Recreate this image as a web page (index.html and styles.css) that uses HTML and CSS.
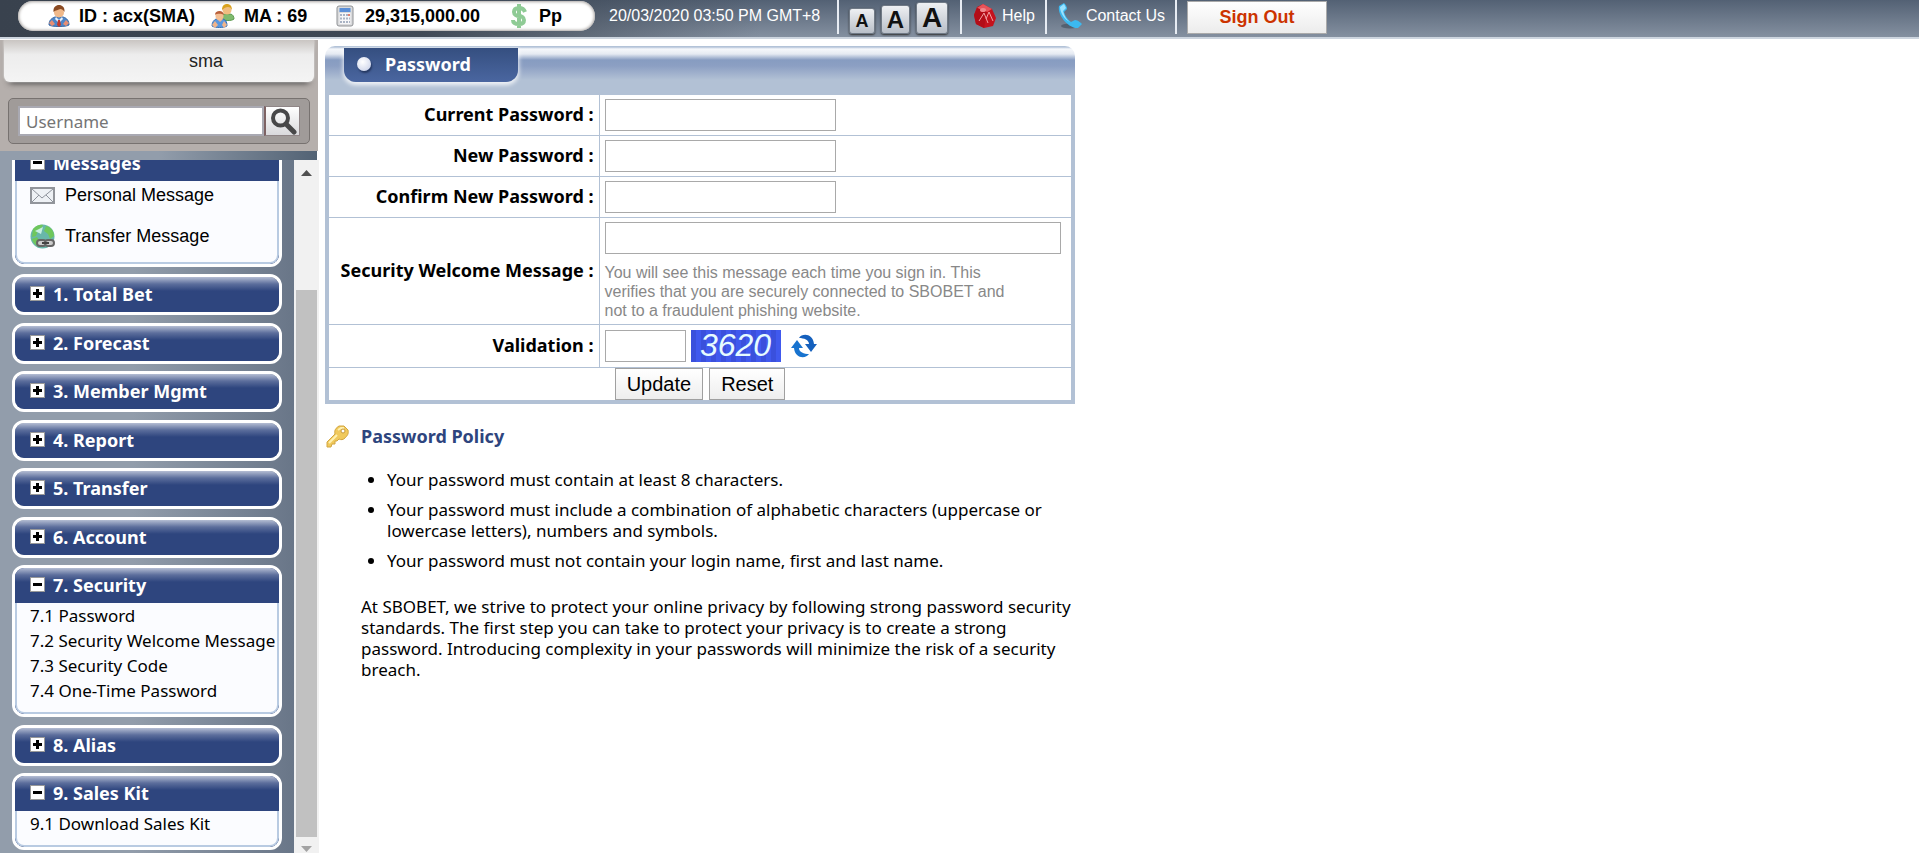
FILE: index.html
```html
<!DOCTYPE html>
<html lang="en">
<head>
<meta charset="utf-8">
<title>Password</title>
<link rel="stylesheet" href="styles.css">
</head>
<body>
<header class="topbar">
  <div class="account">
    <span class="stat stat-id"><svg width="22" height="22" viewBox="0 0 22 22"><path d="M1 20c0-5 3-7 6-8h8c4 1 6 4 6 8-3 2-17 2-20 0z" fill="#4d86c9" stroke="#3a68a3"/><path d="M8 12l3 3 3-3 1 2-3 3-1 4-1-4-3-3z" fill="#e9f1fb"/><path d="M10 15h2l1 5-2 2-2-2z" fill="#c33a2c"/><circle cx="11" cy="7.500" r="5" fill="#f0b98a"/><path d="M5.500 7C5 2 8 0 11 0s6 2 5.500 7c-1-2-3-3-4-3-2 1-5 1-7 3z" fill="#8a4a22"/><path d="M1 18l3-3 3 4-3 2zM21 18l-3-3-3 4 3 2z" fill="#e88e72"/></svg>ID : acx(SMA)</span>
    <span class="stat stat-ma"><svg width="24" height="24" viewBox="0 0 24 24"><path d="M10 15c0-4 2-5 4-5h5c3 0 4 3 4 5-2 2-10 2-13 0z" fill="#7fbb6e" stroke="#5d9a50"/><circle cx="16" cy="6" r="4.500" fill="#f0bd80"/><path d="M11 6c0-4 2-6 5-6s5 2 5 6c-1-2-2-3-4-3s-4 1-6 3z" fill="#d9a21e"/><path d="M1 22c0-4 2-6 4-7h7c3 1 4 3 4 7-3 2-12 2-15 0z" fill="#5a98df" stroke="#3a72b5"/><path d="M1 21l3-4 3 4-3 3zM16 21l-3-4-2 4 2 3zM6 15l3 3 3-3z" fill="#f0b48a"/><circle cx="8.500" cy="12" r="4" fill="#f3be92"/><path d="M4 11c0-3 2-4 4.500-4S13 9 13 11c-2-1-6-2-9 0z" fill="#b9603a"/></svg>MA : 69</span>
    <span class="stat stat-balance"><svg width="18" height="22" viewBox="0 0 18 22"><rect x="1" y="1" width="16" height="20" rx="2" fill="#d9dadc" stroke="#8f9194"/><rect x="3.500" y="3" width="11" height="4" fill="#5b8fd8"/><path d="M3.500 8h11v11h-11z" fill="#f7f7f8"/><path d="M4 10h10M4 13.500h10M4 17h10" stroke="#a9b3c4" stroke-width="2" stroke-dasharray="2 1"/><path d="M12 10h2" stroke="#e08070" stroke-width="2"/></svg>29,315,000.00</span>
    <span class="stat stat-currency"><svg width="16" height="24" viewBox="0 0 16 24"><path d="M14 8c-1-3-3-4-6-4s-5 1-5 4 3 4 5 4 5 1 5 4-2 4-5 4-6-1-6-4M8 0v24" fill="none" stroke="#8fcb95" stroke-width="4"/></svg>Pp</span>
  </div>
  <time class="clock">20/03/2020 03:50 PM GMT+8</time>
  <div class="sizes">
    <button class="size size-s" aria-label="Small text">A</button>
    <button class="size size-m" aria-label="Medium text">A</button>
    <button class="size size-l" aria-label="Large text">A</button>
  </div>
  <a class="toplink help" href="#"><svg width="24" height="26" viewBox="0 0 24 26"><path d="M10 1l9 5 4 9-3 8-9 2-8-4-2-9 3-8z" fill="#c5121c"/><path d="M10 1l9 5-5 3-10-4z" fill="#e8545a"/><path d="M4 5l10 4-3 16-8-4-2-9z" fill="#b30d17"/><path d="M6 18l5-8 4 10M13 16l3-7 4 9" fill="none" stroke="#f2a0a3"/><ellipse cx="10" cy="7" rx="3" ry="2" fill="#f0888c"/></svg>Help</a>
  <a class="toplink contact" href="#"><svg width="25" height="26" viewBox="0 0 25 26"><ellipse cx="12" cy="23" rx="9" ry="2.500" fill="#33404e" opacity=".5"/><path d="M1 3l5-3c2 2 3 4 3 6l-3 3c1 4 4 8 7 10l4-2c3 0 6 3 7 4l-4 4C12 26-1 13 1 3z" fill="#3cb9f0"/><path d="M2 4l4-3 2 4-3 3c1 5 4 9 7 11-5-2-10-9-10-15z" fill="#9be2ff"/></svg>Contact Us</a>
  <button class="signout">Sign Out</button>
</header>

<div class="frames">
  <aside class="sidebar">
    <div class="userbox">
      <div class="nickname">sma</div>
      <form class="search">
        <input type="text" placeholder="Username" aria-label="Username">
        <button type="button" aria-label="Search"><svg width="28" height="28" viewBox="0 0 28 28"><circle cx="11.500" cy="11" r="7.500" fill="none" stroke="#484849" stroke-width="4"/><path d="M17 17l8 8" stroke="#484849" stroke-width="5" stroke-linecap="round"/></svg></button>
      </form>
    </div>
    <div class="strip"></div>
    <div class="scroller">
      <nav class="menu">
        <section class="group open">
          <button class="heading"><i class="sign minus"></i>Messages</button>
          <ul class="messages">
            <li><a href="#"><svg width="25" height="17" viewBox="0 0 25 17"><rect x="1" y="1" width="23" height="15" fill="#eef1f5" stroke="#92959b" stroke-width="2"/><path d="M2 2l10 9L23 2M2 15l7-7M23 15l-7-7" fill="none" stroke="#8e939c"/></svg>Personal Message</a></li>
            <li><a href="#"><svg width="25" height="25" viewBox="0 0 25 25"><circle cx="12.500" cy="12.500" r="12" fill="#68b7a9"/><path d="M3 5c3-4 8-5 10-4l-2 4-3 2-2 5-4 1M16 2c5 1 8 5 8 10l-4 3-2-5-4-3zM2 15l5-2 4 6-1 4c-4-1-7-4-8-8z" fill="#6fc75c"/><path d="M5 7l8-4-2 7z" fill="#c8efe3"/><rect x="7" y="16" width="9" height="6" rx="3" fill="#ccc" stroke="#666" stroke-width="2"/><rect x="15" y="16" width="9" height="6" rx="3" fill="#ccc" stroke="#666" stroke-width="2"/><path d="M12 19h7" stroke="#444" stroke-width="2"/></svg>Transfer Message</a></li>
          </ul>
        </section>
        <section class="group"><button class="heading"><i class="sign"></i>1. Total Bet</button></section>
        <section class="group"><button class="heading"><i class="sign"></i>2. Forecast</button></section>
        <section class="group"><button class="heading"><i class="sign"></i>3. Member Mgmt</button></section>
        <section class="group"><button class="heading"><i class="sign"></i>4. Report</button></section>
        <section class="group"><button class="heading"><i class="sign"></i>5. Transfer</button></section>
        <section class="group"><button class="heading"><i class="sign"></i>6. Account</button></section>
        <section class="group open">
          <button class="heading"><i class="sign minus"></i>7. Security</button>
          <ul class="links">
            <li><a href="#">7.1 Password</a></li>
            <li><a href="#">7.2 Security Welcome Message</a></li>
            <li><a href="#">7.3 Security Code</a></li>
            <li><a href="#">7.4 One-Time Password</a></li>
          </ul>
        </section>
        <section class="group"><button class="heading"><i class="sign"></i>8. Alias</button></section>
        <section class="group open">
          <button class="heading"><i class="sign minus"></i>9. Sales Kit</button>
          <ul class="links">
            <li><a href="#">9.1 Download Sales Kit</a></li>
          </ul>
        </section>
      </nav>
      <div class="scrollbar">
        <svg width="11" height="6" viewBox="0 0 11 6"><path d="M0 6l5.500-6L11 6z" fill="#505050"/></svg>
        <div class="thumb"></div>
        <svg width="11" height="6" viewBox="0 0 11 6"><path d="M0 0h11L5.500 6z" fill="#a3a3a3"/></svg>
      </div>
    </div>
  </aside>

  <main class="content">
    <form class="panel">
      <div class="panel-head"><h1 class="tab"><i class="bullet"></i>Password</h1></div>
      <table class="fields">
        <tr><th><label for="cur">Current Password :</label></th><td><input class="medium" id="cur" type="password"></td></tr>
        <tr><th><label for="new">New Password :</label></th><td><input class="medium" id="new" type="password"></td></tr>
        <tr><th><label for="conf">Confirm New Password :</label></th><td><input class="medium" id="conf" type="password"></td></tr>
        <tr><th><label for="msg">Security Welcome Message :</label></th><td><input class="wide" id="msg" type="text"><p class="hint">You will see this message each time you sign in. This verifies that you are securely connected to SBOBET and not to a fraudulent phishing website.</p></td></tr>
        <tr><th><label for="val">Validation :</label></th><td><div class="validation"><input class="short" id="val" type="text"><span class="captcha">3620</span><a class="refresh" href="#" aria-label="Refresh code"><svg width="26" height="24" viewBox="0 0 26 24"><path d="M8 4c3-5 14-5 15 6h3l-6 8-6-8h4c0-4-5-6-10-6z" fill="#1560bd"/><path d="M18 20C15 25 4 25 3 14H0l6-8 6 8H8c0 4 5 6 10 6z" fill="#1873cf"/></svg></a></div></td></tr>
        <tr><td class="actions" colspan="2"><div class="buttons"><button type="button">Update</button><button type="button">Reset</button></div></td></tr>
      </table>
    </form>

    <section class="policy">
      <svg class="key" width="24" height="24" viewBox="0 0 24 24"><path d="M2 18l8-8c-1-4 1-6 4-8l5 0 4 4c1 4-1 6-3 8-2 2-4 2-6 1l-2 2-2 0 0 3-3 0-1 3-4 0z" fill="#f0c95c" stroke="#d3a640"/><path d="M4 19l8-8M13 6l3-2 3 0" fill="none" stroke="#fff0b0" stroke-width="2"/><circle cx="18" cy="7" r="2" fill="#fff" stroke="#c79a3c"/></svg>
      <div class="policy-text">
        <h2>Password Policy</h2>
        <ul>
          <li>Your password must contain at least 8 characters.</li>
          <li>Your password must include a combination of alphabetic characters (uppercase or lowercase letters), numbers and symbols.</li>
          <li>Your password must not contain your login name, first and last name.</li>
        </ul>
        <p>At SBOBET, we strive to protect your online privacy by following strong password security standards. The first step you can take to protect your privacy is to create a strong password. Introducing complexity in your passwords will minimize the risk of a security breach.</p>
      </div>
    </section>
  </main>
</div>
</body>
</html>
```
FILE: styles.css
```css
* { box-sizing: border-box; }
body {
  margin: 0;
  height: 100vh;
  display: flex;
  flex-direction: column;
  background: #fff;
  color: #000;
  font-family: "Noto Sans", sans-serif;
  font-size: 17px;
}
ul, p, h1, h2 { margin: 0; padding: 0; }
a { color: inherit; text-decoration: none; }
button, input { font: inherit; margin: 0; padding: 0; }
svg { flex: none; display: block; }

/* top bar */
.topbar {
  flex: none;
  height: 39px;
  display: flex;
  align-items: flex-start;
  padding-left: 18px;
  border-bottom: 2px solid #cdd5df;
  background: linear-gradient(90deg, #39424e 0, rgba(57, 66, 78, .9) 420px, rgba(57, 66, 78, 0) 760px), linear-gradient(#536174, #8490a0);
  font-family: "Liberation Sans", Arial, sans-serif;
  font-size: 16px;
  color: #fff;
}
.account {
  width: 577px;
  height: 30px;
  margin-top: 1px;
  padding-left: 30px;
  display: flex;
  align-items: center;
  border-radius: 15px;
  background: #fff;
  box-shadow: inset 0 0 3px 1px #a9a5a2;
  color: #000;
  font-size: 18px;
  font-weight: bold;
  white-space: nowrap;
}
.stat { display: flex; align-items: center; gap: 9px; }
.stat-id { width: 163px; }
.stat-ma { width: 125px; }
.stat-balance { width: 175px; gap: 11px; }
.stat-currency { gap: 12px; }
.clock { width: 242px; padding-left: 14px; line-height: 31px; white-space: nowrap; }
.sizes {
  height: 34px;
  padding: 0 12px 0 10px;
  display: flex;
  align-items: flex-end;
  gap: 6px;
  border-left: 2px solid #e7ecf3;
}
.size {
  border: 1px solid #707a86;
  border-radius: 3px;
  background: linear-gradient(#eef0f3, #b9bfc8);
  box-shadow: 0 1px 2px #333;
  color: #111;
  font-weight: bold;
  line-height: 1;
}
.size-s { width: 26px; height: 26px; font-size: 18px; }
.size-m { width: 29px; height: 29px; font-size: 24px; }
.size-l { width: 32px; height: 32px; font-size: 28px; }
.toplink {
  height: 34px;
  display: flex;
  align-items: center;
  gap: 5px;
  padding: 0 10px 3px 11px;
  border-left: 2px solid #e7ecf3;
  white-space: nowrap;
}
.contact { gap: 3px; border-right: 2px solid #e7ecf3; }
.signout {
  width: 140px;
  height: 33px;
  margin: 1px 0 0 10px;
  border: 1px solid #aaa;
  background: linear-gradient(#fff, #ececec);
  color: #c30;
  font-size: 18px;
  font-weight: bold;
}

.frames { flex: 1; min-height: 0; display: flex; }

/* sidebar */
.sidebar { width: 319px; flex: none; display: flex; flex-direction: column; padding-top: 1px; }
.userbox { width: 318px; height: 111px; padding: 0 8px; background: #b5afac; }
.nickname {
  height: 42px;
  margin: 0 -4px;
  padding-right: 91px;
  text-align: right;
  border-radius: 0 0 6px 6px;
  background: linear-gradient(#c9c5c2, #ededed 35%, #f4f4f4);
  box-shadow: 0 0 2px #eee, 0 6px 6px -5px #333;
  font: 18px/42px "Liberation Sans", Arial, sans-serif;
  color: #222;
}
.search {
  height: 46px;
  margin-top: 16px;
  padding: 7px 9px;
  display: flex;
  border: 1px solid #777270;
  border-radius: 5px;
  background: #a09b99;
}
.search input {
  flex: 1;
  min-width: 0;
  padding: 0 6px;
  border: 2px solid #a9a9b2;
  background: #fff;
}
.search input::placeholder { color: #757575; opacity: 1; }
.search button {
  width: 36px;
  padding-left: 3px;
  border: 1px solid #8f8586;
  border-left: 2px solid #7d6263;
  background: linear-gradient(#fff, #d9d9dc);
}
.strip { height: 9px; width: 317px; flex: none; background: linear-gradient(90deg, #929dab 50%, #526274); }
.scroller { flex: 1; min-height: 0; display: flex; overflow: hidden; }
.menu {
  flex: 1;
  min-width: 0;
  overflow: hidden;
  padding: 0 12px;
  background: linear-gradient(90deg, #929dab 45%, #697688);
}
.group {
  margin-bottom: 8px;
  border: 3px solid #fff;
  border-radius: 12px;
  overflow: hidden;
  background: #2e457e;
}
/* the list is scrolled part-way into its first group */
.group:first-child { margin-top: -17px; }
.group:nth-child(odd) { margin-bottom: 7px; }
.heading {
  width: 100%;
  height: 35px;
  padding: 0 0 2px 15px;
  display: flex;
  align-items: center;
  gap: 8px;
  border: 0;
  background: linear-gradient(#b4bdd3, #5c6e9c 20%, #2e457e 40%);
  color: #fff;
  font-size: 18px;
  font-weight: bold;
}
.sign {
  width: 15px;
  height: 15px;
  flex: none;
  border: 1px solid #999;
  background: linear-gradient(#000, #000) center/9px 3px no-repeat, linear-gradient(#000, #000) center/3px 9px no-repeat, #fff;
}
.sign.minus { background: linear-gradient(#000, #000) center/9px 3px no-repeat, #fff; }
.open ul {
  list-style: none;
  border: 2px solid #b9cbe2;
  border-top: 0;
  border-radius: 0 0 9px 9px;
  background: #fbfcff;
}
.links { padding: 0 0 9px 13px; line-height: 25px; white-space: nowrap; }
.messages { height: 83px; padding-left: 13px; font: 18px/28px "Liberation Sans", Arial, sans-serif; }
.messages a { display: flex; align-items: center; gap: 10px; height: 28px; margin-bottom: 13px; }
.scrollbar {
  width: 25px;
  padding: 10px 2px 1px;
  display: flex;
  flex-direction: column;
  align-items: center;
  background: #f1f1f1;
}
.thumb { width: 21px; flex: 1; margin: 114px 0 9px; background: #c1c1c1; }

/* main content */
.content { flex: 1; padding: 7px 0 0 6px; }
.panel {
  width: 750px;
  padding: 0 4px 4px;
  border-radius: 10px 10px 0 0;
  background: linear-gradient(#b3c3d8 1px, #f6f8fb 3px, #e5eaf2 8px, #879cc1 14px, #8c9fc3 20px, #b2c1d5 34px);
}
.panel-head { height: 49px; padding: 2px 0 0 15px; }
.tab {
  width: 174px;
  height: 34px;
  padding: 0 0 2px 13px;
  display: flex;
  align-items: center;
  gap: 14px;
  border-radius: 0 0 12px 12px;
  background: linear-gradient(#354f80, #4a66a0);
  box-shadow: 0 2px 4px 1px rgba(255, 255, 255, .8);
  color: #fff;
  font-size: 18px;
}
.bullet {
  width: 14px;
  height: 14px;
  border-radius: 50%;
  background: radial-gradient(circle at 40% 35%, #fff, #c4cce6);
  box-shadow: 1px 2px 2px #243760;
}
.fields { width: 100%; border-collapse: collapse; background: #fff; }
.fields th, .fields td { border: 1px solid #b2c1d5; border-width: 1px 0 0 1px; }
.fields tr:first-child > * { border-top: 0; }
.fields tr > :first-child { border-left: 0; }
.fields th { width: 270px; padding: 0 5px 2px 0; text-align: right; white-space: nowrap; font-size: 18px; }
.fields td { padding: 4px 5px; vertical-align: top; }
.fields input { height: 32px; display: block; border: 1px solid #a9a9a9; background: #fff; }
.fields .medium { width: 231px; }
.fields .wide { width: 456px; }
.fields .short { width: 81px; }
.hint {
  width: 420px;
  margin-top: 9px;
  font: 16px/19px "Liberation Sans", Arial, sans-serif;
  color: #888;
}
.validation { display: flex; align-items: center; gap: 5px; height: 34px; }
.captcha {
  width: 90px;
  height: 32px;
  background: repeating-linear-gradient(90deg, #3a50dc 0 5px, #4059ee 5px 10px);
  font: italic 32px/30px "Liberation Sans", Arial, sans-serif;
  text-align: center;
  color: #e6fbff;
}
.refresh { padding-left: 5px; }
.fields .actions { padding: 0; }
.buttons { display: flex; justify-content: center; gap: 6px; }
.buttons button {
  padding: 0 11px;
  height: 32px;
  border: 1px solid #a0a0a0;
  background: linear-gradient(#fff, #eee);
  font: 20px "Liberation Sans", Arial, sans-serif;
}

/* policy */
.policy { width: 760px; margin-top: 20px; display: flex; align-items: flex-start; gap: 12px; }
.policy-text { flex: 1; line-height: 21px; }
.policy h2 { font-size: 18px; line-height: 24px; color: #2e457e; }
.policy ul { margin: 21px 0 25px; padding-left: 26px; }
.policy li { margin-bottom: 9px; }
.policy p { width: 720px; }
```
